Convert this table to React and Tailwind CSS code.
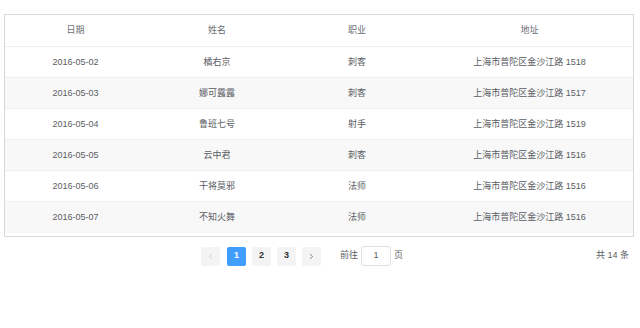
import { ChevronLeft, ChevronRight } from 'lucide-react'

const ROWS = [
  { date: '2016-05-02', name: '橘右京', job: '刺客', addr: '上海市普陀区金沙江路 1518' },
  { date: '2016-05-03', name: '娜可露露', job: '刺客', addr: '上海市普陀区金沙江路 1517' },
  { date: '2016-05-04', name: '鲁班七号', job: '射手', addr: '上海市普陀区金沙江路 1519' },
  { date: '2016-05-05', name: '云中君', job: '刺客', addr: '上海市普陀区金沙江路 1516' },
  { date: '2016-05-06', name: '干将莫邪', job: '法师', addr: '上海市普陀区金沙江路 1516' },
  { date: '2016-05-07', name: '不知火舞', job: '法师', addr: '上海市普陀区金沙江路 1516' },
]

const COLS = 'grid grid-cols-[141px_142px_138px_1fr] items-center'

export default function App() {
  return (
    <div
      className="w-[640px] h-[328px] bg-white pt-[14px] text-[9px] text-[#5a5d62]"
      style={{ fontFamily: '"Liberation Sans", "Noto Sans CJK SC", sans-serif' }}
    >
      <div className="mx-[4px] w-[630px] border border-[#d6d8dd] pb-[3px]">
        <div className={`${COLS} h-[32px] pt-[1px] border-b border-[#ebeef5] text-center text-[#6b6e73]`}>
          <div>日期</div>
          <div>姓名</div>
          <div>职业</div>
          <div>地址</div>
        </div>
        {ROWS.map((r, i) => (
          <div
            key={r.date}
            className={`${COLS} h-[31px] pt-[1px] text-center ${i < ROWS.length - 1 ? 'border-b border-[#ebeef5]' : ''} ${i % 2 === 1 ? 'bg-[#f8f8f9]' : 'bg-white'}`}
          >
            <div>{r.date}</div>
            <div>{r.name}</div>
            <div>{r.job}</div>
            <div>{r.addr}</div>
          </div>
        ))}
      </div>

      <div className="flex items-center h-[20px] mt-[9px] pl-[201px] pr-[11px]">
        <div className="w-[19px] h-[19px] bg-[#f4f4f5] rounded-[2px] flex items-center justify-center text-[#c0c4cc]">
          <ChevronLeft size={9} strokeWidth={2} />
        </div>
        <div className="ml-[7px] w-[19px] h-[19px] bg-[#409eff] rounded-[2px] flex items-center justify-center text-white font-bold">
          1
        </div>
        <div className="ml-[6px] w-[19px] h-[19px] bg-[#f4f4f5] rounded-[2px] flex items-center justify-center text-[#303133] font-bold">
          2
        </div>
        <div className="ml-[6px] w-[19px] h-[19px] bg-[#f4f4f5] rounded-[2px] flex items-center justify-center text-[#303133] font-bold">
          3
        </div>
        <div className="ml-[6px] w-[19px] h-[19px] bg-[#f4f4f5] rounded-[2px] flex items-center justify-center text-[#606266]">
          <ChevronRight size={9} strokeWidth={2} />
        </div>
        <span className="ml-[19px]">前往</span>
        <div className="ml-[3px] w-[30px] h-[20px] border border-[#dcdfe6] rounded-[3px] flex items-center justify-center">
          1
        </div>
        <span className="ml-[3px]">页</span>
        <span className="ml-auto">共 14 条</span>
      </div>
    </div>
  )
}
